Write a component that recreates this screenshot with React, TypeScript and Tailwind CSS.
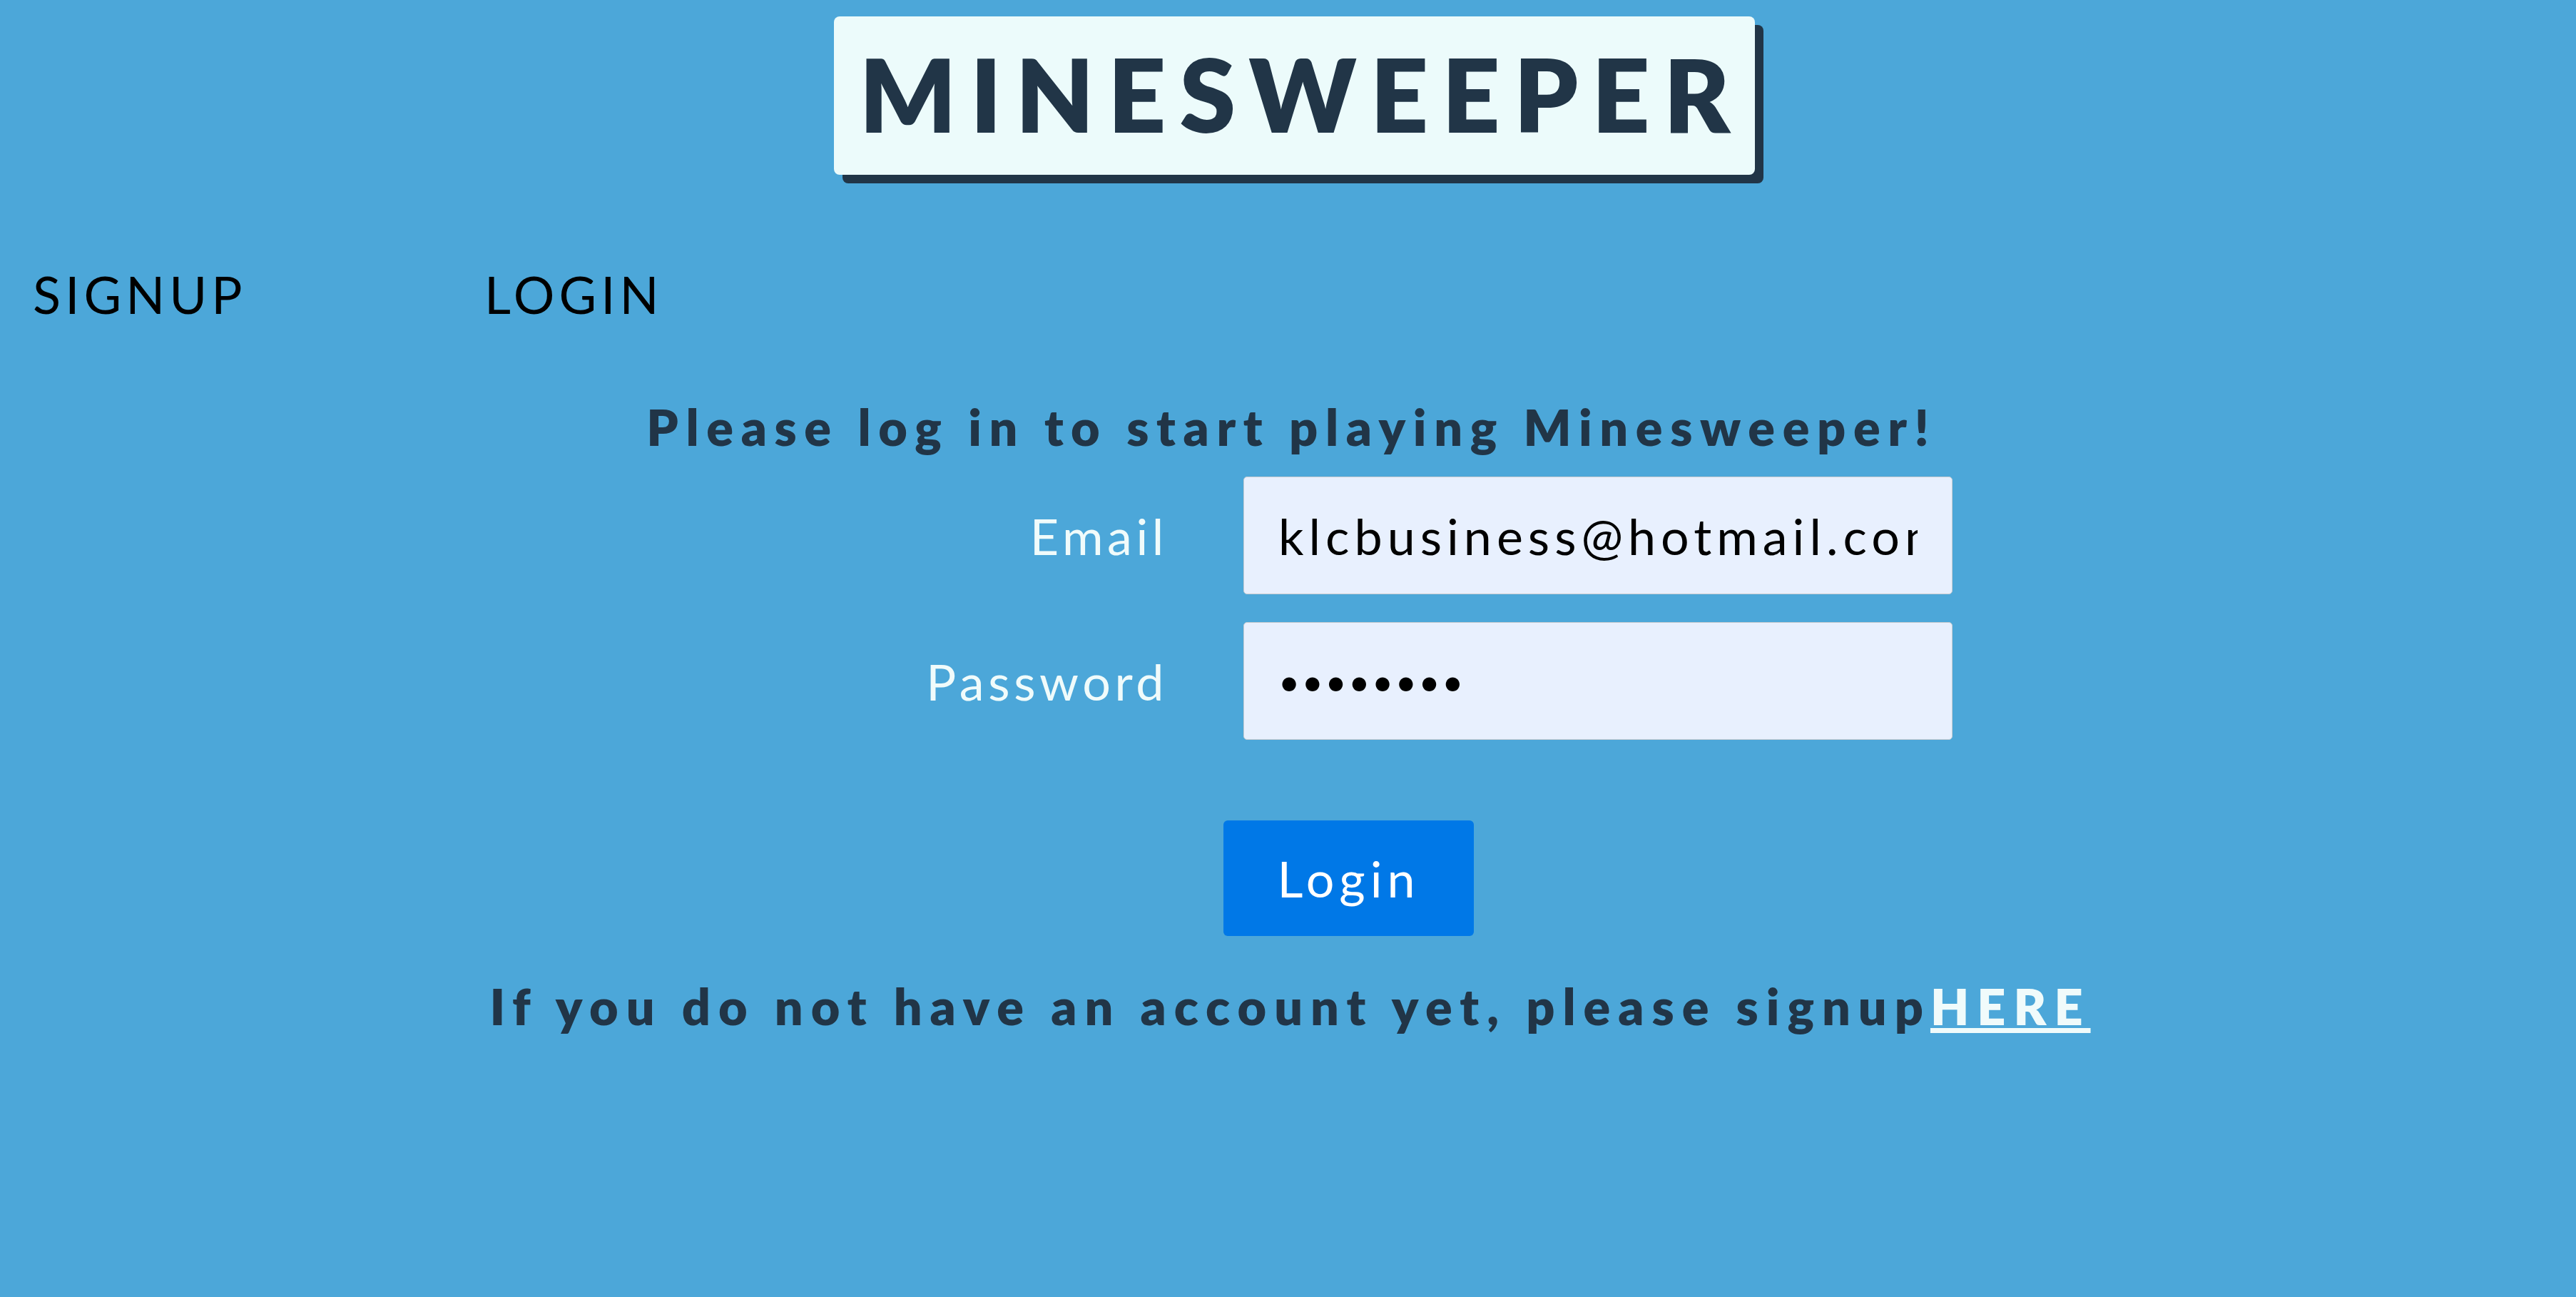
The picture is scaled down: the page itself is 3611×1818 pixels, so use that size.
import React from "react";

export default function App() {
  const font = { fontFamily: "Lato, 'Open Sans', sans-serif" } as React.CSSProperties;
  return (
    <div
      className="min-h-[1818px] w-full bg-[#4ca7d9] flex flex-col"
      style={font}
    >
      <div className="flex justify-center pt-[23px]">
        <h1 className="ml-[18px] bg-[#ecfbfb] rounded-[8px] shadow-[12px_12px_0_#213547] pt-[37px] pb-[43px] pl-[36px] pr-[16px] text-[142px] leading-none font-extrabold text-[#213547] tracking-[0.135em]">
          MINESWEEPER
        </h1>
      </div>

      <nav className="flex mt-[131px] pl-[46px] text-[72px] leading-none text-black tracking-[0.085em]">
        <a className="w-[633px]">SIGNUP</a>
        <a>LOGIN</a>
      </nav>

      <h2 className="mt-[115px] pl-[10px] text-center text-[70px] leading-none font-extrabold text-[#213547] tracking-[0.152em]">
        Please log in to start playing Minesweeper!
      </h2>

      <form className="mt-[35px] mx-auto w-[1863px] flex flex-col gap-[39px]">
        <div className="flex items-center gap-[106px]">
          <label className="w-[763px] text-right text-[70px] leading-none text-[#f0fbfb] tracking-[0.08em]">
            Email
          </label>
          <input
            type="text"
            defaultValue="klcbusiness@hotmail.com"
            className="w-[994px] h-[165px] bg-[#e8f0fe] border border-[#c8ccd0] rounded-[5px] pl-[48px] pr-[48px] text-[70px] text-black tracking-[0.1em] outline-none"
            style={font}
          />
        </div>
        <div className="flex items-center gap-[106px]">
          <label className="w-[763px] text-right text-[70px] leading-none text-[#f0fbfb] tracking-[0.08em]">
            Password
          </label>
          <input
            type="password"
            defaultValue="12345678"
            className="w-[994px] h-[165px] bg-[#e8f0fe] border border-[#c8ccd0] rounded-[5px] pl-[48px] pr-[48px] text-[52px] text-black tracking-[0.05em] outline-none"
            style={font}
          />
        </div>
      </form>

      <div className="mt-[113px] flex justify-center pl-[170px]">
        <button className="w-[351px] h-[162px] bg-[#0078e7] rounded-[6px] text-white text-[70px] leading-none tracking-[0.1em]">
          Login
        </button>
      </div>

      <p className="mt-[63px] pl-[6px] text-center text-[70px] leading-none font-extrabold text-[#213547] tracking-[0.157em]">
        If you do not have an account yet, please signup
        <a className="text-[#f0fbfb] underline">HERE</a>
      </p>
    </div>
  );
}
